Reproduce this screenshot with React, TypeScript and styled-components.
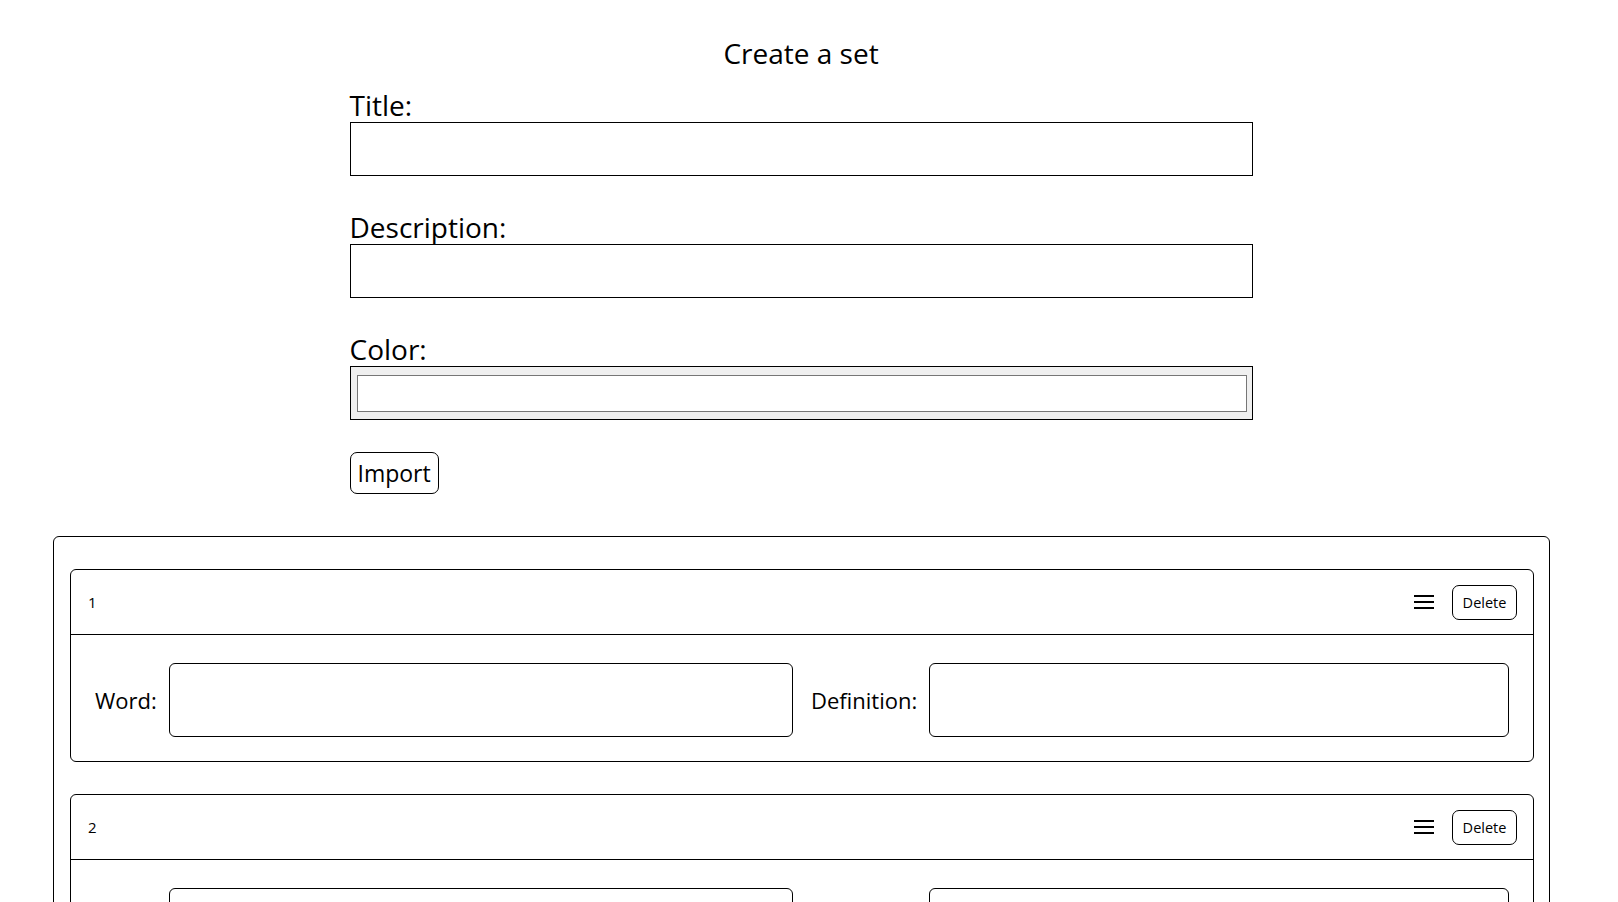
import React from "react";
import styled, { createGlobalStyle } from "styled-components";

const GlobalStyle = createGlobalStyle`
  body {
    margin: 0;
    background: #ffffff;
    color: #000000;
    font-family: "Open Sans", "Noto Sans", sans-serif;
  }
  * {
    box-sizing: border-box;
  }
`;

const Page = styled.div`
  /* leaves room for the 16px scrollbar gutter seen in the reference */
  padding: 36px 16px 40px 0;
`;

const Heading = styled.h1`
  margin: 0 0 18px;
  font-size: 28px;
  line-height: 34px;
  font-weight: 400;
  text-align: center;
`;

const Form = styled.form`
  width: 903px;
  margin: 0 auto;
  display: flex;
  flex-direction: column;
  align-items: flex-start;
  gap: 34px;
`;

const Field = styled.div`
  width: 100%;
  display: flex;
  flex-direction: column;
`;

const Label = styled.label`
  display: block;
  font-size: 28px;
  line-height: 34px;
`;

const TextInput = styled.input`
  width: 100%;
  height: 54px;
  border: 1px solid #000;
  border-radius: 0;
  padding: 0 8px;
  font-family: inherit;
  font-size: 20px;
  background: #fff;
  outline: none;
`;

const ColorInput = styled.input`
  width: 100%;
  height: 54px;
  border: 1px solid #000;
  border-radius: 0;
  padding: 0;
  margin: 0;
  background: #efefef;
  cursor: pointer;
  &::-webkit-color-swatch-wrapper {
    padding: 8px 5px 7px 6px;
  }
  &::-webkit-color-swatch {
    border: 1px solid #767676;
    border-radius: 0;
  }
`;

const ImportButton = styled.button`
  margin-top: -2px;
  height: 42px;
  padding: 0 7px;
  border: 1px solid #000;
  border-radius: 7px;
  background: #fff;
  color: #000;
  font-family: inherit;
  font-size: 23px;
  line-height: 1;
  cursor: pointer;
`;

const CardList = styled.div`
  margin: 42px 52px 0 53px;
  padding: 32px 15px 32px 16px;
  border: 1px solid #000;
  border-radius: 6px;
  display: flex;
  flex-direction: column;
  gap: 32px;
`;

const Card = styled.div`
  border: 1px solid #000;
  border-radius: 6px;
`;

const CardHeader = styled.div`
  height: 65px;
  padding: 0 16px 0 17px;
  border-bottom: 1px solid #000;
  display: flex;
  align-items: center;
`;

const CardNumber = styled.span`
  flex: 1;
  font-size: 15px;
`;

const DragHandle = styled.span`
  display: inline-flex;
  margin-right: 18px;
  cursor: grab;
`;

const DeleteButton = styled.button`
  width: 65px;
  height: 35px;
  padding: 0;
  border: 1px solid #000;
  border-radius: 7px;
  background: #fff;
  color: #000;
  font-family: inherit;
  font-size: 14.5px;
  cursor: pointer;
`;

const CardBody = styled.div`
  padding: 28px 24px 24px;
  display: flex;
  gap: 18px;
`;

const TermGroup = styled.div`
  flex: 1;
  min-width: 0;
  display: flex;
  align-items: center;
  gap: 12px;
`;

const TermLabel = styled.label`
  font-size: 22px;
  white-space: nowrap;
`;

const TermInput = styled.input`
  flex: 1;
  min-width: 0;
  height: 74px;
  border: 1px solid #000;
  border-radius: 6px;
  padding: 0 10px;
  font-family: inherit;
  font-size: 20px;
  background: #fff;
  outline: none;
`;

const HamburgerIcon = () => (
  <svg width="20" height="14" viewBox="0 0 20 14" aria-hidden="true">
    <rect x="0" y="0" width="20" height="2" fill="#000" />
    <rect x="0" y="6" width="20" height="2" fill="#000" />
    <rect x="0" y="12" width="20" height="2" fill="#000" />
  </svg>
);

const terms = [1, 2];

export default function App() {
  return (
    <>
      <GlobalStyle />
      <Page>
        <Heading>Create a set</Heading>
        <Form onSubmit={(e) => e.preventDefault()}>
          <Field>
            <Label htmlFor="title">Title:</Label>
            <TextInput id="title" type="text" />
          </Field>
          <Field>
            <Label htmlFor="description">Description:</Label>
            <TextInput id="description" type="text" />
          </Field>
          <Field>
            <Label htmlFor="color">Color:</Label>
            <ColorInput id="color" type="color" defaultValue="#ffffff" />
          </Field>
          <ImportButton type="button">Import</ImportButton>
        </Form>
        <CardList>
          {terms.map((n) => (
            <Card key={n}>
              <CardHeader>
                <CardNumber>{n}</CardNumber>
                <DragHandle>
                  <HamburgerIcon />
                </DragHandle>
                <DeleteButton type="button">Delete</DeleteButton>
              </CardHeader>
              <CardBody>
                <TermGroup>
                  <TermLabel htmlFor={`word-${n}`}>Word:</TermLabel>
                  <TermInput id={`word-${n}`} type="text" />
                </TermGroup>
                <TermGroup>
                  <TermLabel htmlFor={`def-${n}`}>Definition:</TermLabel>
                  <TermInput id={`def-${n}`} type="text" />
                </TermGroup>
              </CardBody>
            </Card>
          ))}
        </CardList>
      </Page>
    </>
  );
}
